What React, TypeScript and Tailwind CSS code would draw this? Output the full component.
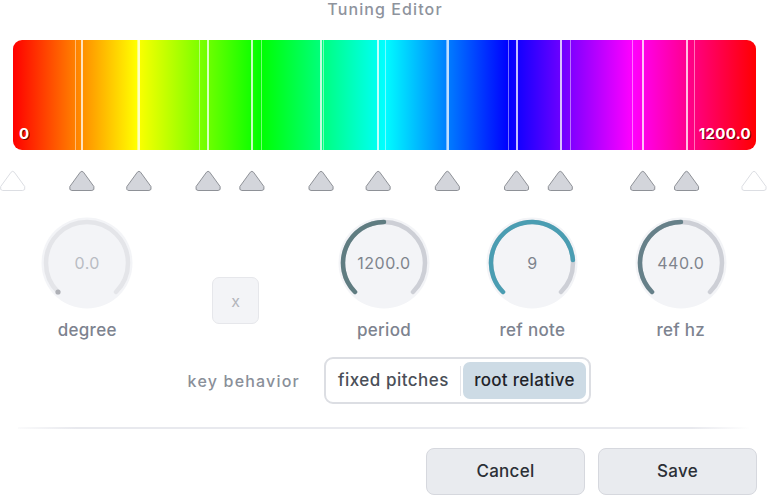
import React from "react";

const BAR_W = 743;
const ET = [100, 200, 300, 400, 500, 600, 700, 800, 900, 1000, 1100];
const JI = [111.7, 203.9, 315.6, 386.3, 498, 590.2, 702, 813.7, 884.4, 1017.6, 1088.3];

function pt(cx: number, cy: number, r: number, deg: number) {
  const a = (deg * Math.PI) / 180;
  return [cx + r * Math.cos(a), cy - r * Math.sin(a)];
}

function arc(cx: number, cy: number, r: number, from: number, to: number) {
  const [x1, y1] = pt(cx, cy, r, from);
  const [x2, y2] = pt(cx, cy, r, to);
  const large = from - to > 180 ? 1 : 0;
  return `M ${x1} ${y1} A ${r} ${r} 0 ${large} 1 ${x2} ${y2}`;
}

function Knob({
  label,
  text,
  value,
  color,
  track = "#cdcfd6",
  disabled,
}: {
  label: string;
  text: string;
  value: number;
  color: string;
  track?: string;
  disabled?: boolean;
}) {
  const end = 225 - 270 * value;
  const [dx, dy] = pt(46, 46, 41, 225);
  return (
    <div className="flex flex-col items-center">
      <div className="relative w-[92px] h-[92px]">
        <svg width="92" height="92" viewBox="0 0 92 92">
          <circle cx="46" cy="46" r="45.5" fill="#f3f4f7" />
          <path d={arc(46, 46, 41, 225, -45)} stroke={track} strokeWidth="4.5" fill="none" strokeLinecap="round" />
          {disabled ? (
            <circle cx={dx} cy={dy} r="2.6" fill="#aeb0b6" />
          ) : (
            <path d={arc(46, 46, 41, 225, end)} stroke={color} strokeWidth="4.5" fill="none" strokeLinecap="round" />
          )}
        </svg>
        <div
          className={`absolute inset-0 flex items-center justify-center text-[16px] tracking-[0.5px] ${
            disabled ? "text-[#b9bcc3]" : "text-[#7f848d]"
          }`}
        >
          {text}
        </div>
      </div>
      <div className="mt-[11px] text-[17px] font-medium leading-[20px] tracking-[0.3px] text-[#7d838f]">{label}</div>
    </div>
  );
}

function Triangles() {
  const cents = [0, ...JI, 1200];
  return (
    <svg width="768" height="26" viewBox="0 0 768 26" className="block">
      {cents.map((c, i) => {
        const x = i === cents.length - 1 ? 754 : 12.7 + (BAR_W * c) / 1200;
        const edge = i === 0 || i === cents.length - 1;
        return (
          <path
            key={i}
            d={`M ${x - 1.6} 3.2 Q ${x} 1.4 ${x + 1.6} 3.2 L ${x + 12} 17.5 Q ${x + 13} 21.5 ${x + 10} 21.5 L ${x - 10} 21.5 Q ${x - 13} 21.5 ${x - 12} 17.5 Z`}
            fill={edge ? "#ffffff" : "#d3d5db"}
            stroke={edge ? "#dcdee3" : "#8e9197"}
            strokeWidth="1"
          />
        );
      })}
    </svg>
  );
}

export default function App() {
  return (
    <div
      className="w-[768px] h-[496px] bg-white overflow-hidden flex flex-col"
      style={{ fontFamily: "Inter, 'Noto Sans', sans-serif" }}
    >
      <div className="h-[20px] flex items-center justify-center text-[16px] font-medium tracking-[1.1px] text-[#8e939d] -mt-[1px] pl-[2px]">
        Tuning Editor
      </div>

      <div className="mt-[21px] ml-[13px] w-[743px] h-[110px] rounded-[9px] relative overflow-hidden bg-[linear-gradient(to_right,#ff0000,#ffff00,#00ff00,#00ffff,#0000ff,#ff00ff,#ff0000)]">
        {ET.map((c) => (
          <div
            key={"e" + c}
            className="absolute top-0 bottom-0 w-px bg-white/45"
            style={{ left: (BAR_W * c) / 1200 }}
          />
        ))}
        {JI.map((c) => (
          <div
            key={"j" + c}
            className="absolute top-0 bottom-0 w-[2px] bg-white/75"
            style={{ left: (BAR_W * c) / 1200 - 1 }}
          />
        ))}
        <div className="absolute left-[6px] bottom-[5px] text-[15px] font-bold text-white [text-shadow:1px_1px_0_rgba(80,0,0,0.8)]">
          0
        </div>
        <div className="absolute right-[5px] bottom-[5px] text-[15px] font-bold tracking-[0.3px] text-white [text-shadow:1px_1px_0_rgba(80,0,0,0.8)]">
          1200.0
        </div>
      </div>

      <div className="mt-[19px]">
        <Triangles />
      </div>

      <div className="mt-[22px] px-[13px] grid grid-cols-5">
        <Knob label="degree" text="0.0" value={0} color="#aeb0b6" track="#e4e5e9" disabled />
        <div className="flex justify-center pt-[60px]">
          <div className="w-[47px] h-[47px] rounded-[7px] bg-[#f3f4f7] border border-[#e6e7eb] flex items-center justify-center text-[16px] text-[#b3b6bc]">
            x
          </div>
        </div>
        <Knob label="period" text="1200.0" value={0.5} color="#5f7c81" />
        <Knob label="ref note" text="9" value={9 / 11} color="#4a9db2" />
        <Knob label="ref hz" text="440.0" value={0.5} color="#668089" />
      </div>

      <div className="mt-[17px] flex items-center">
        <div className="w-[300px] flex justify-end text-[16px] font-medium tracking-[1.2px] text-[#8a8f99]">key behavior</div>
        <div className="ml-[24px] w-[267px] h-[47px] rounded-[9px] border-2 border-[#dcdee3] p-[3px] flex items-center">
          <div className="flex-1 h-full flex items-center justify-center text-[17px] font-medium tracking-[0.5px] text-[#4a4f58]">
            fixed pitches
          </div>
          <div className="w-px h-[30px] bg-[#e5e6ea] mx-[2px]" />
          <div className="w-[123px] h-full rounded-[7px] bg-[#cddbe5] flex items-center justify-center text-[17px] font-medium tracking-[0.3px] text-[#1f2329]">
            root relative
          </div>
        </div>
      </div>

      <div className="mt-[23px] mx-[18px] h-[2px] bg-[linear-gradient(to_right,rgba(232,233,238,0.2),#e8e9ee_8%,#e8e9ee_92%,rgba(232,233,238,0))]" />

      <div className="mt-[19px] flex justify-end gap-[13px] pr-[11px]">
        <button className="w-[159px] h-[47px] rounded-[8px] bg-[#e9ebef] border border-[#d6d8de] text-[17px] font-medium tracking-[0.3px] text-[#2b2f36]">
          Cancel
        </button>
        <button className="w-[159px] h-[47px] rounded-[8px] bg-[#e9ebef] border border-[#d6d8de] text-[17px] font-medium tracking-[0.3px] text-[#2b2f36]">
          Save
        </button>
      </div>
    </div>
  );
}
